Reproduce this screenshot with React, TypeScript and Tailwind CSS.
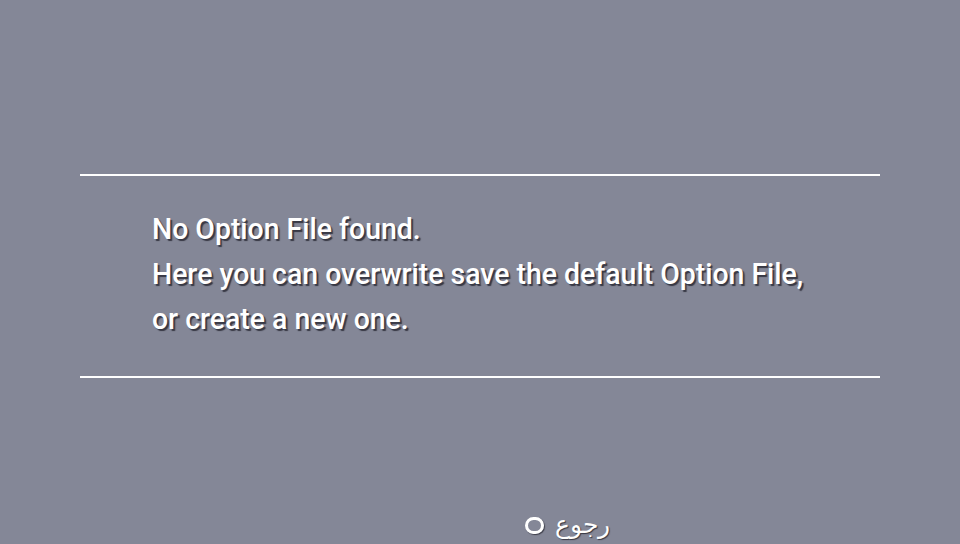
export default function App() {
  const lines = [
    "No Option File found.",
    "Here you can overwrite save the default Option File,",
    "or create a new one.",
  ];

  return (
    <div className="w-[960px] h-[544px] bg-[#848797] flex flex-col overflow-hidden font-['Roboto',sans-serif] text-white">
      <div className="h-[174px] shrink-0" />
      <div className="mx-[80px] h-[2px] shrink-0 bg-white" />
      <div className="h-[200px] shrink-0 pl-[152px] pt-[30px]">
        <div className="origin-left scale-x-[0.947] w-[900px] [text-shadow:2px_2px_1px_rgba(30,30,40,0.75)]">
          {lines.map((l) => (
            <p key={l} className="text-[30px] font-medium leading-[45px]">
              {l}
            </p>
          ))}
        </div>
      </div>
      <div className="mx-[80px] h-[2px] shrink-0 bg-white" />
      <div className="flex-1 flex items-end justify-center pb-[4px] pl-[175px]">
        <div className="flex items-center gap-[11px] [text-shadow:1px_1px_1px_rgba(30,30,40,0.75)]">
          <span className="w-[19px] h-[17px] rounded-full border-[3px] border-white shadow-[1px_1px_1px_rgba(30,30,40,0.7)]" />
          <span dir="rtl" className="text-[25px] font-['Noto_Sans',sans-serif] leading-none pb-[4px]">
            رجوع
          </span>
        </div>
      </div>
    </div>
  );
}
